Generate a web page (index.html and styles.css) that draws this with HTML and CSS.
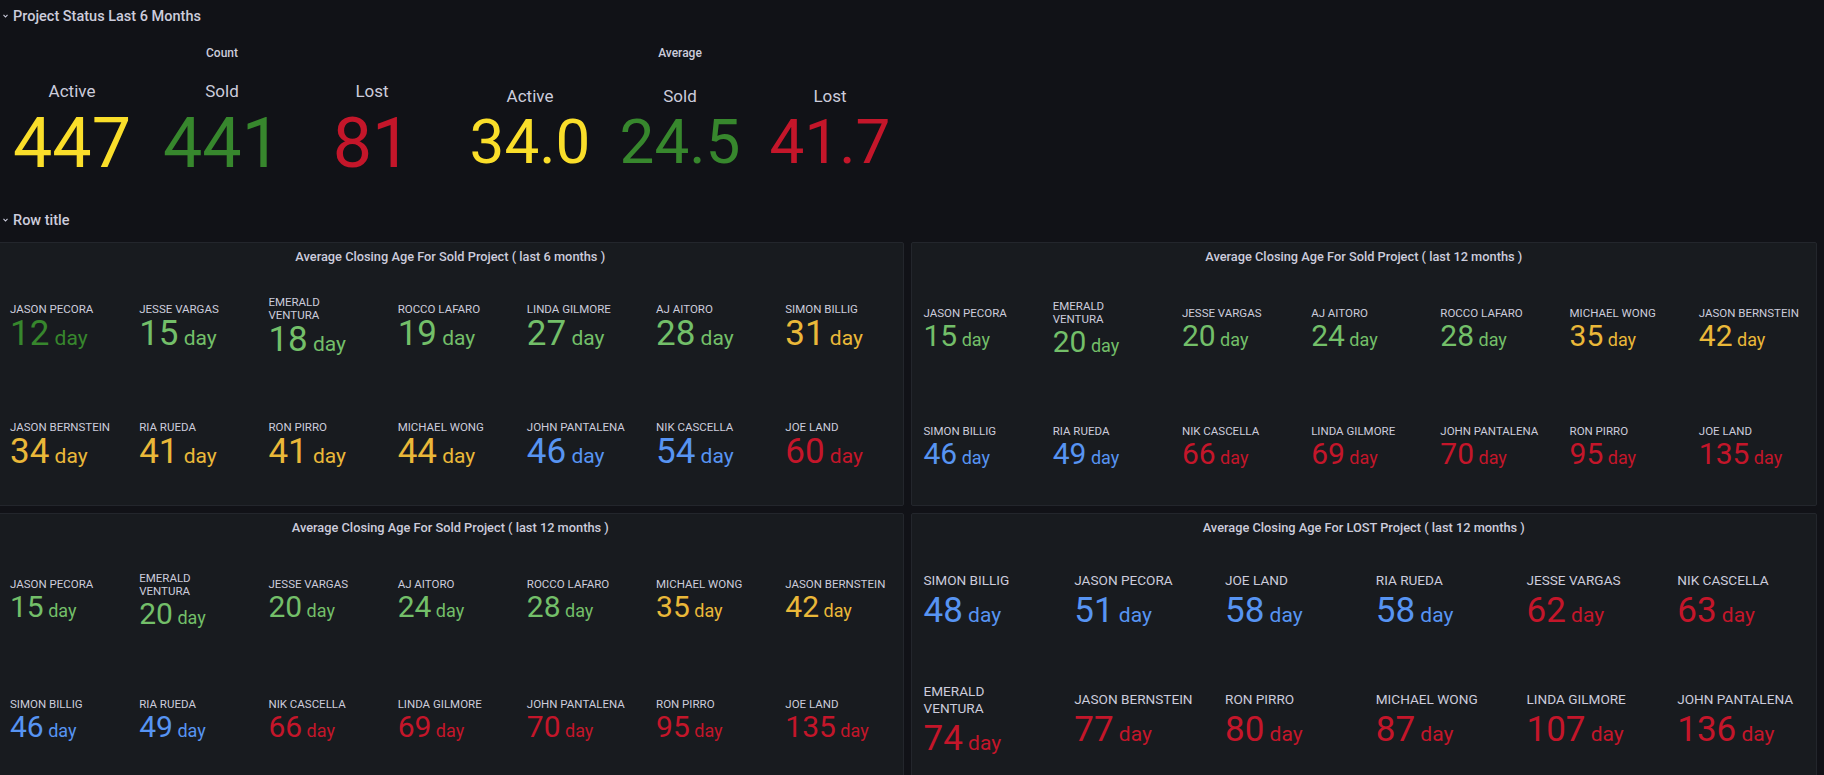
FILE: index.html
```html
<!DOCTYPE html>
<html lang="en">
<head>
<meta charset="utf-8">
<title>Project Status</title>
<link rel="stylesheet" href="styles.css">
</head>
<body>
<div class="dashboard">
  <div class="row-header">
    <svg class="chev" width="5" height="4" viewBox="0 0 5 4"><polyline points="0.5,0.8 2.5,3 4.5,0.8" fill="none" stroke="#ccccdc" stroke-width="1.1"/></svg>
    <span>Project Status Last 6 Months</span>
  </div>

  <div class="stat-row">
    <section class="stat-panel">
      <h2 class="stat-title">Count</h2>
      <div class="stat-items">
        <div class="stat-item"><div class="stat-name">Active</div><div class="stat-value c-yellow">447</div></div>
        <div class="stat-item"><div class="stat-name">Sold</div><div class="stat-value c-dgreen">441</div></div>
        <div class="stat-item"><div class="stat-name">Lost</div><div class="stat-value c-red">81</div></div>
      </div>
    </section>
    <section class="stat-panel stat-panel--avg">
      <h2 class="stat-title">Average</h2>
      <div class="stat-items">
        <div class="stat-item"><div class="stat-name">Active</div><div class="stat-value c-yellow">34.0</div></div>
        <div class="stat-item"><div class="stat-name">Sold</div><div class="stat-value c-dgreen">24.5</div></div>
        <div class="stat-item"><div class="stat-name">Lost</div><div class="stat-value c-red">41.7</div></div>
      </div>
    </section>
  </div>

  <div class="row-header row-header--second">
    <svg class="chev" width="5" height="4" viewBox="0 0 5 4"><polyline points="0.5,0.8 2.5,3 4.5,0.8" fill="none" stroke="#ccccdc" stroke-width="1.1"/></svg>
    <span>Row title</span>
  </div>

  <div class="panel-grid">
    <section class="panel panel--a">
      <h3 class="panel-title">Average Closing Age For Sold Project ( last 6 months )</h3>
      <div class="items">
        <div class="item"><div class="item-name">JASON PECORA</div><div class="item-value c-dgreen">12<span class="unit"> day</span></div></div>
        <div class="item"><div class="item-name">JESSE VARGAS</div><div class="item-value c-lgreen">15<span class="unit"> day</span></div></div>
        <div class="item"><div class="item-name">EMERALD<br>VENTURA</div><div class="item-value c-lgreen">18<span class="unit"> day</span></div></div>
        <div class="item"><div class="item-name">ROCCO LAFARO</div><div class="item-value c-lgreen">19<span class="unit"> day</span></div></div>
        <div class="item"><div class="item-name">LINDA GILMORE</div><div class="item-value c-lgreen">27<span class="unit"> day</span></div></div>
        <div class="item"><div class="item-name">AJ AITORO</div><div class="item-value c-lgreen">28<span class="unit"> day</span></div></div>
        <div class="item"><div class="item-name">SIMON BILLIG</div><div class="item-value c-gold">31<span class="unit"> day</span></div></div>
        <div class="item"><div class="item-name">JASON BERNSTEIN</div><div class="item-value c-gold">34<span class="unit"> day</span></div></div>
        <div class="item"><div class="item-name">RIA RUEDA</div><div class="item-value c-gold">41<span class="unit"> day</span></div></div>
        <div class="item"><div class="item-name">RON PIRRO</div><div class="item-value c-gold">41<span class="unit"> day</span></div></div>
        <div class="item"><div class="item-name">MICHAEL WONG</div><div class="item-value c-gold">44<span class="unit"> day</span></div></div>
        <div class="item"><div class="item-name">JOHN PANTALENA</div><div class="item-value c-blue">46<span class="unit"> day</span></div></div>
        <div class="item"><div class="item-name">NIK CASCELLA</div><div class="item-value c-blue">54<span class="unit"> day</span></div></div>
        <div class="item"><div class="item-name">JOE LAND</div><div class="item-value c-red">60<span class="unit"> day</span></div></div>
      </div>
    </section>

    <section class="panel panel--b">
      <h3 class="panel-title">Average Closing Age For Sold Project ( last 12 months )</h3>
      <div class="items">
        <div class="item"><div class="item-name">JASON PECORA</div><div class="item-value c-lgreen">15<span class="unit"> day</span></div></div>
        <div class="item"><div class="item-name">EMERALD<br>VENTURA</div><div class="item-value c-lgreen">20<span class="unit"> day</span></div></div>
        <div class="item"><div class="item-name">JESSE VARGAS</div><div class="item-value c-lgreen">20<span class="unit"> day</span></div></div>
        <div class="item"><div class="item-name">AJ AITORO</div><div class="item-value c-lgreen">24<span class="unit"> day</span></div></div>
        <div class="item"><div class="item-name">ROCCO LAFARO</div><div class="item-value c-lgreen">28<span class="unit"> day</span></div></div>
        <div class="item"><div class="item-name">MICHAEL WONG</div><div class="item-value c-gold">35<span class="unit"> day</span></div></div>
        <div class="item"><div class="item-name">JASON BERNSTEIN</div><div class="item-value c-gold">42<span class="unit"> day</span></div></div>
        <div class="item"><div class="item-name">SIMON BILLIG</div><div class="item-value c-blue">46<span class="unit"> day</span></div></div>
        <div class="item"><div class="item-name">RIA RUEDA</div><div class="item-value c-blue">49<span class="unit"> day</span></div></div>
        <div class="item"><div class="item-name">NIK CASCELLA</div><div class="item-value c-red">66<span class="unit"> day</span></div></div>
        <div class="item"><div class="item-name">LINDA GILMORE</div><div class="item-value c-red">69<span class="unit"> day</span></div></div>
        <div class="item"><div class="item-name">JOHN PANTALENA</div><div class="item-value c-red">70<span class="unit"> day</span></div></div>
        <div class="item"><div class="item-name">RON PIRRO</div><div class="item-value c-red">95<span class="unit"> day</span></div></div>
        <div class="item"><div class="item-name">JOE LAND</div><div class="item-value c-red">135<span class="unit"> day</span></div></div>
      </div>
    </section>

    <section class="panel panel--b panel--lower">
      <h3 class="panel-title">Average Closing Age For Sold Project ( last 12 months )</h3>
      <div class="items">
        <div class="item"><div class="item-name">JASON PECORA</div><div class="item-value c-lgreen">15<span class="unit"> day</span></div></div>
        <div class="item"><div class="item-name">EMERALD<br>VENTURA</div><div class="item-value c-lgreen">20<span class="unit"> day</span></div></div>
        <div class="item"><div class="item-name">JESSE VARGAS</div><div class="item-value c-lgreen">20<span class="unit"> day</span></div></div>
        <div class="item"><div class="item-name">AJ AITORO</div><div class="item-value c-lgreen">24<span class="unit"> day</span></div></div>
        <div class="item"><div class="item-name">ROCCO LAFARO</div><div class="item-value c-lgreen">28<span class="unit"> day</span></div></div>
        <div class="item"><div class="item-name">MICHAEL WONG</div><div class="item-value c-gold">35<span class="unit"> day</span></div></div>
        <div class="item"><div class="item-name">JASON BERNSTEIN</div><div class="item-value c-gold">42<span class="unit"> day</span></div></div>
        <div class="item"><div class="item-name">SIMON BILLIG</div><div class="item-value c-blue">46<span class="unit"> day</span></div></div>
        <div class="item"><div class="item-name">RIA RUEDA</div><div class="item-value c-blue">49<span class="unit"> day</span></div></div>
        <div class="item"><div class="item-name">NIK CASCELLA</div><div class="item-value c-red">66<span class="unit"> day</span></div></div>
        <div class="item"><div class="item-name">LINDA GILMORE</div><div class="item-value c-red">69<span class="unit"> day</span></div></div>
        <div class="item"><div class="item-name">JOHN PANTALENA</div><div class="item-value c-red">70<span class="unit"> day</span></div></div>
        <div class="item"><div class="item-name">RON PIRRO</div><div class="item-value c-red">95<span class="unit"> day</span></div></div>
        <div class="item"><div class="item-name">JOE LAND</div><div class="item-value c-red">135<span class="unit"> day</span></div></div>
      </div>
    </section>

    <section class="panel panel--c panel--lower">
      <h3 class="panel-title">Average Closing Age For LOST Project ( last 12 months )</h3>
      <div class="items items--6">
        <div class="item"><div class="item-name">SIMON BILLIG</div><div class="item-value c-blue">48<span class="unit"> day</span></div></div>
        <div class="item"><div class="item-name">JASON PECORA</div><div class="item-value c-blue">51<span class="unit"> day</span></div></div>
        <div class="item"><div class="item-name">JOE LAND</div><div class="item-value c-blue">58<span class="unit"> day</span></div></div>
        <div class="item"><div class="item-name">RIA RUEDA</div><div class="item-value c-blue">58<span class="unit"> day</span></div></div>
        <div class="item"><div class="item-name">JESSE VARGAS</div><div class="item-value c-red">62<span class="unit"> day</span></div></div>
        <div class="item"><div class="item-name">NIK CASCELLA</div><div class="item-value c-red">63<span class="unit"> day</span></div></div>
        <div class="item"><div class="item-name">EMERALD<br>VENTURA</div><div class="item-value c-red">74<span class="unit"> day</span></div></div>
        <div class="item"><div class="item-name">JASON BERNSTEIN</div><div class="item-value c-red">77<span class="unit"> day</span></div></div>
        <div class="item"><div class="item-name">RON PIRRO</div><div class="item-value c-red">80<span class="unit"> day</span></div></div>
        <div class="item"><div class="item-name">MICHAEL WONG</div><div class="item-value c-red">87<span class="unit"> day</span></div></div>
        <div class="item"><div class="item-name">LINDA GILMORE</div><div class="item-value c-red">107<span class="unit"> day</span></div></div>
        <div class="item"><div class="item-name">JOHN PANTALENA</div><div class="item-value c-red">136<span class="unit"> day</span></div></div>
      </div>
    </section>
  </div>
</div>
</body>
</html>
```

FILE: styles.css
```css
* { box-sizing: border-box; }

html, body {
  margin: 0;
  height: 775px;
  overflow: hidden;
  background: #111217;
  color: #ccccdc;
  font-family: Roboto, "Liberation Sans", sans-serif;
}

.dashboard {
  padding-right: 7px;
}

/* row headers */
.row-header {
  height: 32px;
  display: flex;
  align-items: center;
  padding-left: 3px;
  font-size: 14.5px;
  font-weight: 500;
  color: #ccccdc;
}
.row-header--second {
  height: 30px;
  margin-top: 8px;
}
.chev {
  display: block;
  margin-right: 5px;
  flex: none;
}

/* top stat row */
.stat-row {
  display: grid;
  grid-template-columns: repeat(4, 1fr);
  column-gap: 8px;
  margin: 6px 0 0 -3px;
  height: 159px;
}
.stat-panel {
  display: flex;
  flex-direction: column;
}
.stat-title {
  margin: 0;
  font-size: 12px;
  font-weight: 500;
  line-height: 30px;
  text-align: center;
}
.stat-items {
  flex: 1;
  display: grid;
  grid-template-columns: repeat(3, 150px);
  justify-content: center;
  padding-bottom: 6px;
}
.stat-item {
  display: flex;
  flex-direction: column;
  align-items: center;
  justify-content: center;
}
.stat-name {
  font-size: 17px;
  line-height: 20px;
}
.stat-value {
  font-size: 70px;
  line-height: 70px;
  margin-top: 7px;
}
.stat-panel--avg .stat-value {
  font-size: 62px;
  line-height: 62px;
  margin-top: 5px;
}

/* panel grid */
.panel-grid {
  display: grid;
  grid-template-columns: 1fr 1fr;
  column-gap: 7px;
  row-gap: 7px;
  margin: 7px 0 0 -3px;
}
.panel {
  background: #181b1f;
  border: 1px solid #23262c;
  border-radius: 2px;
  padding-bottom: 1px;
}
.panel-title {
  margin: 0;
  font-size: 12.8px;
  font-weight: 500;
  line-height: 20px;
  padding: 4px 0 1px;
  text-align: center;
  color: #ccccdc;
}
.items {
  display: grid;
  grid-template-columns: repeat(7, 1fr);
  grid-template-rows: repeat(2, 118px);
}
.panel--lower .items {
  grid-template-rows: repeat(2, 119.5px);
}
.items--6 {
  grid-template-columns: repeat(6, 1fr);
}
.item {
  display: flex;
  flex-direction: column;
  justify-content: center;
  padding-left: 12px;
  padding-top: 4px;
  min-width: 0;
}
.item-name {
  font-size: 11.5px;
  line-height: 13px;
  color: #ccccdc;
  white-space: nowrap;
}
.item-value {
  font-size: 35px;
  line-height: 35px;
  margin-top: 0;
  white-space: nowrap;
}
.unit {
  font-size: 0.6em;
}

.panel--b .item {
  padding-top: 7px;
}
.panel--b .item-value {
  font-size: 30px;
  line-height: 30px;
  margin-top: 1px;
}
.panel--c .item {
  padding-top: 7px;
}
.panel--c .item-name {
  font-size: 13.6px;
  line-height: 17px;
}
.panel--c .item-value {
  margin-top: 4px;
}

/* colours */
.c-yellow { color: #fade2a; }
.c-dgreen { color: #37872d; }
.c-lgreen { color: #73bf69; }
.c-gold { color: #eab839; }
.c-blue { color: #5794f2; }
.c-red { color: #c4162a; }
```
